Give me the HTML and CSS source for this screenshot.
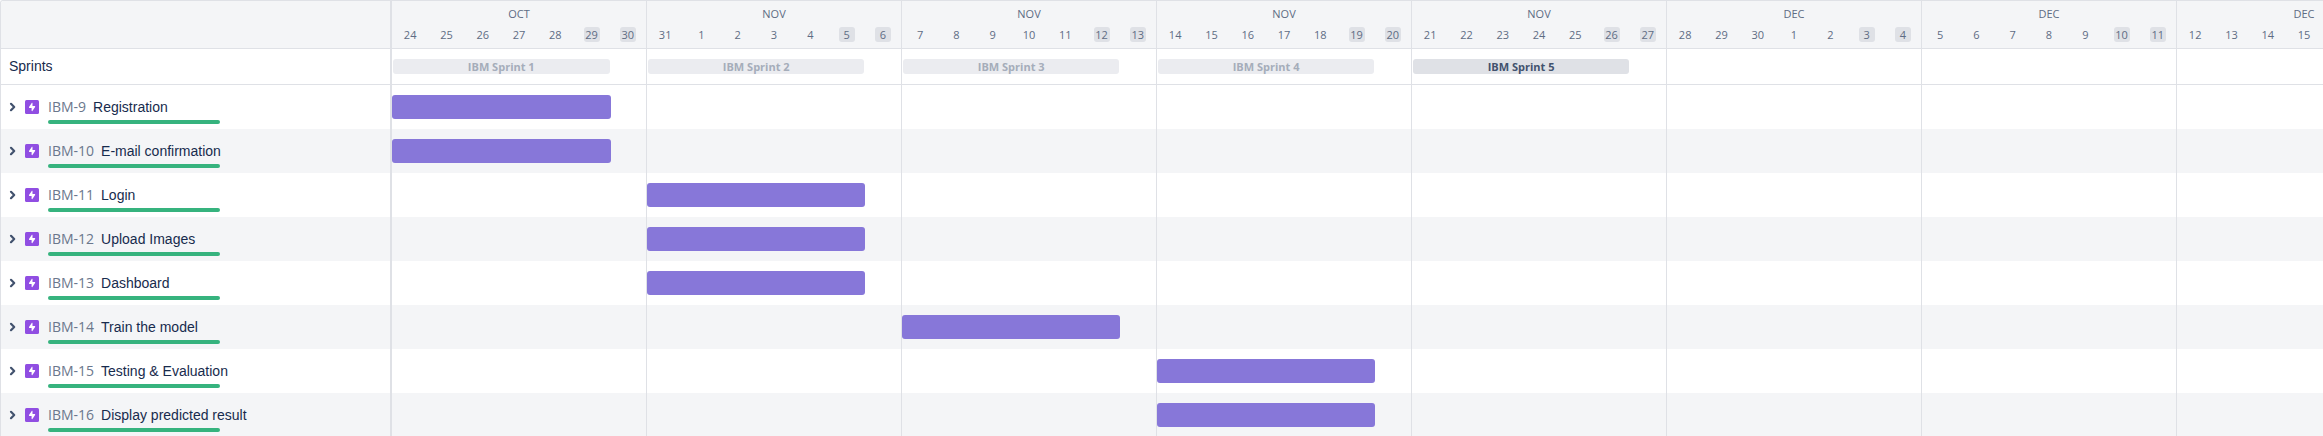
FILE: index.html
```html
<!DOCTYPE html>
<html lang="en">
<head>
<meta charset="utf-8">
<title>Roadmap</title>
<link rel="stylesheet" href="styles.css">
</head>
<body>
<svg class="sprite" aria-hidden="true">
  <symbol id="chevron" viewBox="0 0 8 10"><path d="M2 1.8 5.2 5 2 8.2" fill="none" stroke="currentColor" stroke-width="2.2" stroke-linecap="round" stroke-linejoin="round"/></symbol>
  <symbol id="epic" viewBox="0 0 14 14"><rect width="14" height="14" rx="1.5" fill="#904ee2"/><path d="M7.500 3.200v2.900h2.200c.4 0 .6.4.4.8L7.400 11c-.2.3-.8.2-.8-.2V7.900H4.400c-.4 0-.6-.4-.4-.8L6.700 3c.2-.3.8-.2.8.2z" fill="#fff"/></symbol>
</svg>
<main class="board">
  <header class="row head">
    <div class="side"></div>
    <div class="weeks">
      <section class="week"><div class="month">OCT</div><div class="days"><span>24</span><span>25</span><span>26</span><span>27</span><span>28</span><span class="off">29</span><span class="off">30</span></div></section>
      <section class="week"><div class="month">NOV</div><div class="days"><span>31</span><span>1</span><span>2</span><span>3</span><span>4</span><span class="off">5</span><span class="off">6</span></div></section>
      <section class="week"><div class="month">NOV</div><div class="days"><span>7</span><span>8</span><span>9</span><span>10</span><span>11</span><span class="off">12</span><span class="off">13</span></div></section>
      <section class="week"><div class="month">NOV</div><div class="days"><span>14</span><span>15</span><span>16</span><span>17</span><span>18</span><span class="off">19</span><span class="off">20</span></div></section>
      <section class="week"><div class="month">NOV</div><div class="days"><span>21</span><span>22</span><span>23</span><span>24</span><span>25</span><span class="off">26</span><span class="off">27</span></div></section>
      <section class="week"><div class="month">DEC</div><div class="days"><span>28</span><span>29</span><span>30</span><span>1</span><span>2</span><span class="off">3</span><span class="off">4</span></div></section>
      <section class="week"><div class="month">DEC</div><div class="days"><span>5</span><span>6</span><span>7</span><span>8</span><span>9</span><span class="off">10</span><span class="off">11</span></div></section>
      <section class="week"><div class="month">DEC</div><div class="days"><span>12</span><span>13</span><span>14</span><span>15</span></div></section>
    </div>
  </header>

  <div class="row sprints">
    <div class="side">Sprints</div>
    <div class="track">
      <div class="sprint closed w1">IBM Sprint 1</div>
      <div class="sprint closed w2">IBM Sprint 2</div>
      <div class="sprint closed w3">IBM Sprint 3</div>
      <div class="sprint closed w4">IBM Sprint 4</div>
      <div class="sprint w5">IBM Sprint 5</div>
    </div>
  </div>

  <div class="row epic">
    <div class="side">
      <button class="toggle" aria-label="Expand IBM-9"><svg><use href="#chevron"/></svg></button>
      <svg class="type"><use href="#epic"/></svg>
      <div class="info"><div class="line"><a class="key" href="#IBM-9">IBM-9</a><span>Registration</span></div><div class="progress"></div></div>
    </div>
    <div class="track"><div class="bar w1"></div></div>
  </div>
  <div class="row epic">
    <div class="side">
      <button class="toggle" aria-label="Expand IBM-10"><svg><use href="#chevron"/></svg></button>
      <svg class="type"><use href="#epic"/></svg>
      <div class="info"><div class="line"><a class="key" href="#IBM-10">IBM-10</a><span>E-mail confirmation</span></div><div class="progress"></div></div>
    </div>
    <div class="track"><div class="bar w1"></div></div>
  </div>
  <div class="row epic">
    <div class="side">
      <button class="toggle" aria-label="Expand IBM-11"><svg><use href="#chevron"/></svg></button>
      <svg class="type"><use href="#epic"/></svg>
      <div class="info"><div class="line"><a class="key" href="#IBM-11">IBM-11</a><span>Login</span></div><div class="progress"></div></div>
    </div>
    <div class="track"><div class="bar w2"></div></div>
  </div>
  <div class="row epic">
    <div class="side">
      <button class="toggle" aria-label="Expand IBM-12"><svg><use href="#chevron"/></svg></button>
      <svg class="type"><use href="#epic"/></svg>
      <div class="info"><div class="line"><a class="key" href="#IBM-12">IBM-12</a><span>Upload Images</span></div><div class="progress"></div></div>
    </div>
    <div class="track"><div class="bar w2"></div></div>
  </div>
  <div class="row epic">
    <div class="side">
      <button class="toggle" aria-label="Expand IBM-13"><svg><use href="#chevron"/></svg></button>
      <svg class="type"><use href="#epic"/></svg>
      <div class="info"><div class="line"><a class="key" href="#IBM-13">IBM-13</a><span>Dashboard</span></div><div class="progress"></div></div>
    </div>
    <div class="track"><div class="bar w2"></div></div>
  </div>
  <div class="row epic">
    <div class="side">
      <button class="toggle" aria-label="Expand IBM-14"><svg><use href="#chevron"/></svg></button>
      <svg class="type"><use href="#epic"/></svg>
      <div class="info"><div class="line"><a class="key" href="#IBM-14">IBM-14</a><span>Train the model</span></div><div class="progress"></div></div>
    </div>
    <div class="track"><div class="bar w3"></div></div>
  </div>
  <div class="row epic">
    <div class="side">
      <button class="toggle" aria-label="Expand IBM-15"><svg><use href="#chevron"/></svg></button>
      <svg class="type"><use href="#epic"/></svg>
      <div class="info"><div class="line"><a class="key" href="#IBM-15">IBM-15</a><span>Testing &amp; Evaluation</span></div><div class="progress"></div></div>
    </div>
    <div class="track"><div class="bar w4"></div></div>
  </div>
  <div class="row epic">
    <div class="side">
      <button class="toggle" aria-label="Expand IBM-16"><svg><use href="#chevron"/></svg></button>
      <svg class="type"><use href="#epic"/></svg>
      <div class="info"><div class="line"><a class="key" href="#IBM-16">IBM-16</a><span>Display predicted result</span></div><div class="progress"></div></div>
    </div>
    <div class="track"><div class="bar w4"></div></div>
  </div>
</main>
</body>
</html>
```

FILE: styles.css
```css
* { box-sizing: border-box; }

:root {
  --line: #dfe1e6;
  --week: 255px;
}

body {
  margin: 0;
  background: #fff;
  color: #172b4d;
  font: 14px/20px "Liberation Sans", Arial, sans-serif;
}

.sprite { display: none; }

.board {
  max-height: 100vh;
  overflow: hidden;
  border: 1px solid var(--line);
  border-width: 1px 0 0 1px;
  border-top-left-radius: 3px;
}

.row { display: flex; }

.side {
  display: flex;
  flex: none;
  width: 391px;
  padding: 0 8px;
  border-right: 2px solid var(--line);
}

.weeks,
.track {
  flex: 1;
  min-width: 0;
  overflow: hidden;
}

/* Header */
.head {
  height: 48px;
  background: #f4f5f7;
  border-bottom: 1px solid var(--line);
  color: #5e6c84;
  font: 11px/15px "Open Sans", "Noto Sans", sans-serif;
}

.weeks { display: flex; }

.week {
  flex: none;
  width: var(--week);
  padding-top: 5px;
  border-right: 1px solid var(--line);
  text-align: center;
}

.days {
  display: grid;
  grid-template-columns: repeat(7, 1fr);
  justify-items: center;
  margin-top: 6px;
}

.days span { min-width: 16px; }

.off {
  border-radius: 3px;
  background: var(--line);
}

/* Timeline tracks */
.track {
  display: grid;
  grid-template-columns: repeat(56, calc(var(--week) / 7));
  align-items: center;
  background: repeating-linear-gradient(to right, transparent 0 254px, var(--line) 254px 255px);
}

.w1 { grid-column: 1 / span 6; }
.w2 { grid-column: 8 / span 6; }
.w3 { grid-column: 15 / span 6; }
.w4 { grid-column: 22 / span 6; }
.w5 { grid-column: 29 / span 6; }

.sprints {
  height: 36px;
  border-bottom: 1px solid var(--line);
}

.sprints .side { padding-top: 7px; }

.sprint {
  margin: 0 1px;
  border-radius: 3px;
  background: var(--line);
  color: #42526e;
  font: bold 11px/15px "Open Sans", "Noto Sans", sans-serif;
  text-align: center;
}

.closed {
  background: #ebecf0;
  color: #a5adba;
}

/* Epics */
.epic { height: 44px; }
.epic:nth-child(even) { background: #f4f5f7; }
.epic .side { padding-top: 12px; }

.toggle {
  display: flex;
  align-items: center;
  width: 16px;
  height: 20px;
  padding: 0;
  border: 0;
  background: none;
  color: #42526e;
}

.toggle svg {
  width: 8px;
  height: 10px;
}

.type {
  width: 14px;
  height: 14px;
  margin: 3px 9px 0 0;
}

.line {
  display: flex;
  gap: 7px;
  height: 20px;
}

.key {
  color: #6b778c;
  font-family: "Open Sans", "Noto Sans", sans-serif;
  text-decoration: none;
}

.progress {
  width: 172px;
  height: 4px;
  margin-top: 3px;
  border-radius: 2px;
  background: #36b37e;
}

.bar {
  height: 24px;
  border-radius: 3px;
  background: #8777d9;
}
```
